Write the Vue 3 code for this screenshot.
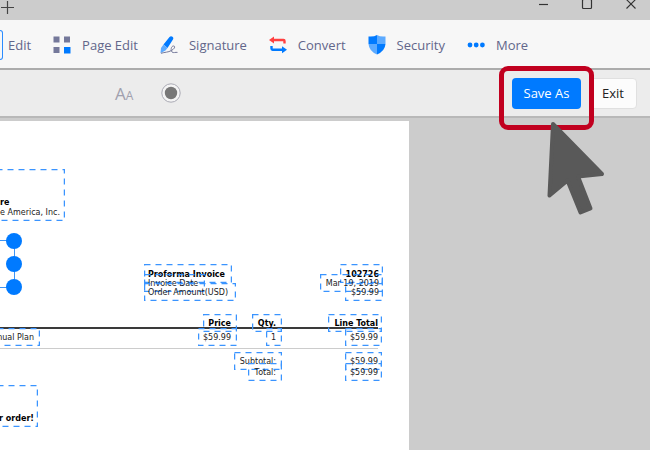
<template>
  <div class="app">
    <header class="titlebar">
      <button class="plain" aria-label="New tab">
        <svg width="14" height="14" viewBox="0 0 14 14"><path d="M7.500 1v13M1 7.500h13" stroke="#444" stroke-width="1.2" /></svg>
      </button>
      <div class="windowButtons">
        <button class="plain" aria-label="Minimize">
          <svg width="12" height="12" viewBox="0 0 12 12"><path d="M2 6.5h9" stroke="#333" stroke-width="1.2" /></svg>
        </button>
        <button class="plain" aria-label="Maximize">
          <svg width="12" height="12" viewBox="0 0 12 12"><rect x="1.5" y="1.5" width="9" height="9" rx="1" fill="none" stroke="#333" stroke-width="1.2" /></svg>
        </button>
        <button class="plain" aria-label="Close">
          <svg width="12" height="12" viewBox="0 0 12 12"><path d="M1.5 1.5l9 9M10.5 1.5l-9 9" stroke="#333" stroke-width="1.1" /></svg>
        </button>
      </div>
    </header>

    <nav class="menu">
      <span class="menuActive"></span>
      <button class="menuItem first">Edit</button>
      <button class="menuItem">
        <svg width="18" height="18" viewBox="0 0 18 18">
          <path d="M0.5 0.5h6v6h-6zM11 0.5h6v6h-6zM0.5 11h6v6h-6z" fill="#74789a" />
          <path d="M11 11h6.500v6.500h-6.500z" fill="#007aff" />
        </svg>
        Page Edit
      </button>
      <button class="menuItem">
        <svg width="18" height="18" viewBox="0 0 18 18">
          <path d="M3.500 8.500L9.500 1Q11-0.500 12.500 0.800Q14 2 12.800 3.800L7.500 12z" fill="#007aff" />
          <path d="M3.500 8.500L7.500 12L5.500 14.600L0.500 17.200L1 12z" fill="#5caaff" />
          <path d="M1 17.300C5 16 8 16.500 11.500 14.500C15 12.500 15.500 10 13.500 10C11 10 10.500 14.500 12 16C13.500 17.300 15.500 16 17.500 16.400" fill="none" stroke="#74789a" stroke-width="1" />
        </svg>
        Signature
      </button>
      <button class="menuItem">
        <svg width="18" height="18" viewBox="0 0 18 18">
          <path d="M4 4H14.500Q15.500 4 15.500 5V7.500" fill="none" stroke="#ff4040" stroke-width="2.400" />
          <path d="M0 4L5 0.500V7.500z" fill="#ff4040" />
          <path d="M2.500 10V12.500Q2.500 13.700 3.500 13.700H14" fill="none" stroke="#007aff" stroke-width="2.400" />
          <path d="M18 13.700L13 10.200V17.200z" fill="#007aff" />
        </svg>
        Convert
      </button>
      <button class="menuItem">
        <svg width="18" height="20" viewBox="0 0 18 20">
          <path d="M9 0Q6 2 0.500 1.500V9H9z" fill="#007aff" />
          <path d="M9 0Q12 2 17.500 1.500V9H9z" fill="#5caaff" />
          <path d="M0.500 9H9V19.500Q1 16 0.500 9z" fill="#5caaff" />
          <path d="M17.500 9H9V19.500Q17 16 17.500 9z" fill="#007aff" />
        </svg>
        Security
      </button>
      <button class="menuItem">
        <svg width="18" height="18" viewBox="0 0 18 18">
          <circle cx="3" cy="9" r="2.400" fill="#007aff" />
          <circle cx="9.200" cy="9" r="2.400" fill="#007aff" />
          <circle cx="15.400" cy="9" r="2.400" fill="#007aff" />
        </svg>
        More
      </button>
    </nav>

    <div class="toolbar">
      <button class="plain fontSize" aria-label="Font size">A<small>A</small></button>
      <button class="plain" aria-label="Color">
        <svg width="20" height="20" viewBox="0 0 20 20">
          <circle cx="10" cy="10" r="9.200" fill="#f4f4f4" stroke="#aaaab4" stroke-width="1" />
          <circle cx="10" cy="10" r="6.200" fill="#777" />
        </svg>
      </button>
      <div class="actions">
        <div class="saveWrap">
          <button class="save">Save As</button>
          <div class="highlight"></div>
          <svg class="pointer" width="58" height="96" viewBox="0 0 58 96">
            <path d="M6 3L55 53L31 55.500L43.500 87.500L33.500 91.500L20.500 59.500L2.500 74.500z" fill="#595959" stroke="#595959" stroke-width="4" stroke-linejoin="round" />
          </svg>
        </div>
        <button class="exit">Exit</button>
      </div>
    </div>

    <main class="workspace">
      <section class="page">
        <div class="rule dark"></div>
        <div class="rule light"></div>
        <div
          v-for="(block, i) in blocks"
          :key="i"
          class="block"
          :class="{ bold: block.bold, left: block.left, wide: block.wide }"
          :style="{ left: block.x + 'px', top: block.y + 'px', width: block.w + 'px', height: block.h + 'px' }"
        >
          <svg class="outline"><rect x="0.5" y="0.5" :width="block.w - 1" :height="block.h - 1" /></svg>
          <p v-for="line in block.lines" :key="line.text" :class="{ bold: line.bold }">{{ line.text }}</p>
        </div>
        <div class="selection">
          <i class="handle"></i>
          <i class="handle"></i>
          <i class="handle"></i>
        </div>
      </section>
    </main>
  </div>
</template>

<script setup>
const text = (value) => [{ text: value }]

// positions are relative to the top left corner of the page
const blocks = [
  { x: -4, y: 48, w: 69, h: 52, lines: [{ text: 're', bold: true }, { text: 'e America, Inc.' }], left: true },
  { x: 144, y: 143, w: 88, h: 19, lines: text('Proforma Invoice'), bold: true, left: true },
  { x: 144, y: 153, w: 61, h: 18, lines: text('Invoice Date'), left: true },
  { x: 144, y: 162, w: 92, h: 18, lines: text('Order Amount(USD)'), left: true },
  { x: 340, y: 143, w: 43, h: 19, lines: text('102726'), bold: true },
  { x: 320, y: 153, w: 63, h: 18, lines: text('Mar 19, 2019') },
  { x: 345, y: 162, w: 38, h: 18, lines: text('$59.99') },
  { x: 203, y: 193, w: 34, h: 18, lines: text('Price'), bold: true, wide: true },
  { x: 252, y: 193, w: 30, h: 18, lines: text('Qty.'), bold: true, wide: true },
  { x: 328, y: 193, w: 54, h: 18, lines: text('Line Total'), bold: true },
  { x: -80, y: 207, w: 120, h: 18, lines: text('nual Plan'), wide: true },
  { x: 198, y: 207, w: 39, h: 18, lines: text('$59.99'), wide: true },
  { x: 266, y: 207, w: 16, h: 18, lines: text('1'), wide: true },
  { x: 345, y: 207, w: 37, h: 18, lines: text('$59.99') },
  { x: 234, y: 231, w: 48, h: 18, lines: text('Subtotal:'), wide: true },
  { x: 345, y: 231, w: 37, h: 18, lines: text('$59.99') },
  { x: 248, y: 242, w: 34, h: 18, lines: text('Total:'), wide: true },
  { x: 345, y: 242, w: 37, h: 18, lines: text('$59.99') },
  { x: -80, y: 264, w: 118, h: 42, lines: text('r order!'), bold: true },
]
</script>

<style>
body {
  background-color: #ccc;
}
</style>

<style scoped>
.app {
  height: 100vh;
  display: flex;
  flex-direction: column;
  overflow: hidden;
  background-color: #ccc;
  font-family: "Open Sans", "Noto Sans", sans-serif;
  font-size: 13px;
}

button {
  font: inherit;
  cursor: pointer;
}

svg {
  display: block;
  flex: none;
}

.plain {
  padding: 0;
  border: none;
  background: transparent;
}

.titlebar {
  height: 20px;
  flex: none;
  display: flex;
  align-items: flex-start;
  justify-content: space-between;
  padding-right: 13px;
  box-sizing: border-box;
}

.windowButtons {
  display: flex;
  gap: 32px;
  margin-top: -2px;
}

.menu {
  height: 50px;
  flex: none;
  box-sizing: border-box;
  display: flex;
  align-items: center;
  padding-top: 1px;
  background-color: #f7f7f7;
  border-bottom: 2px solid #acacac;
}

.menuActive {
  width: 3px;
  height: 30px;
  box-sizing: border-box;
  border: 1px solid #2b8cff;
  border-left: none;
  border-radius: 0 4px 4px 0;
}

.menuItem {
  display: flex;
  align-items: center;
  gap: 11px;
  padding: 0;
  margin-left: 22px;
  border: none;
  background: transparent;
  color: #62668a;
  white-space: nowrap;
}

.menuItem.first {
  margin-left: 5px;
}

.toolbar {
  height: 48px;
  flex: none;
  box-sizing: border-box;
  display: flex;
  align-items: center;
  padding: 0 13px 0 115px;
  gap: 28px;
  background-color: #ececec;
  border-bottom: 2px solid #b8b8b8;
}

.fontSize {
  color: #a0a0ae;
  font-size: 17px;
}

.fontSize small {
  font-size: 12px;
}

.actions {
  display: flex;
  gap: 8px;
  margin-left: auto;
}

.saveWrap {
  position: relative;
}

.save,
.exit {
  height: 31px;
  padding: 0;
  border: none;
  border-radius: 4px;
}

.save {
  width: 69px;
  background-color: #007aff;
  color: white;
}

.exit {
  width: 48px;
  background-color: #fcfcfc;
  border: 1px solid #e0e0e0;
  color: #222;
}

.highlight {
  position: absolute;
  top: -12px;
  left: -13px;
  right: -13px;
  bottom: -21px;
  box-sizing: border-box;
  border: 5px solid #c1001f;
  border-radius: 9px;
  pointer-events: none;
}

.pointer {
  position: absolute;
  top: 43px;
  left: 35px;
  z-index: 1;
  pointer-events: none;
}

.workspace {
  flex: 1;
  display: flex;
  padding-top: 3px;
}

.page {
  position: relative;
  width: 409px;
  background-color: white;
  overflow: hidden;
}

.rule {
  position: absolute;
  left: 0;
  width: 378px;
}

.rule.dark {
  top: 206px;
  height: 2px;
  background-color: #3a3a3a;
}

.rule.light {
  top: 227px;
  height: 1px;
  background-color: #ccc;
}

.block {
  position: absolute;
  box-sizing: border-box;
  display: flex;
  flex-direction: column;
  justify-content: flex-end;
  padding: 4px 4px 3px;
  font-family: "DejaVu Sans", sans-serif;
  font-size: 8px;
  line-height: 10px;
  text-align: right;
  white-space: nowrap;
  color: #222;
}

.block.wide {
  padding-right: 6px;
}

.block.left {
  text-align: left;
}

.block p {
  margin: 0;
}

.bold {
  font-weight: bold;
  color: black;
}

.outline {
  position: absolute;
  inset: 0;
  width: 100%;
  height: 100%;
}

.outline rect {
  fill: none;
  stroke: #3a94ff;
  stroke-width: 1.5;
  stroke-dasharray: 6 5;
}

.selection {
  position: absolute;
  left: -20px;
  top: 119px;
  width: 35px;
  height: 48px;
  box-sizing: border-box;
  border: 1px solid #3d94f5;
  display: flex;
  flex-direction: column;
  justify-content: space-between;
  align-items: flex-end;
}

.handle {
  width: 16px;
  height: 16px;
  margin: -8px;
  border-radius: 50%;
  background-color: #007aff;
}
</style>
